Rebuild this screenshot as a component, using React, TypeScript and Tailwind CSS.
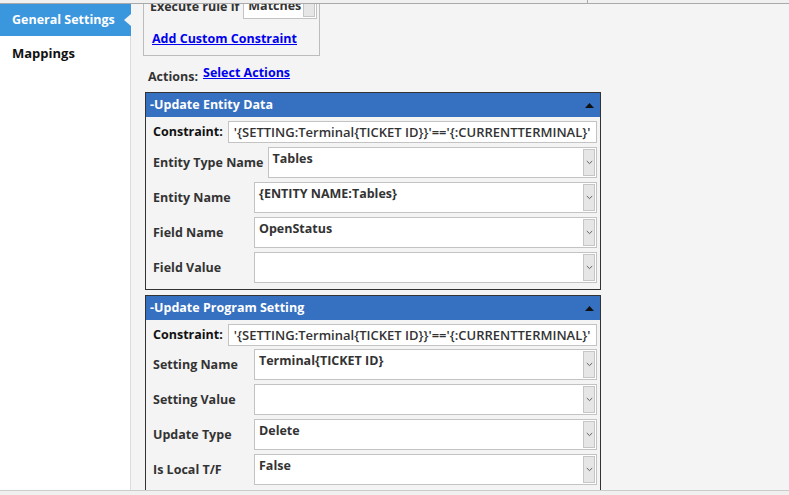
import React from "react";

const font = { fontFamily: '"Open Sans", "Noto Sans", Arial, sans-serif' };

function Chevron() {
  return (
    <svg width="7" height="5" viewBox="0 0 7 5" className="block">
      <path d="M0.8 1 L3.5 3.6 L6.2 1" fill="none" stroke="#555" strokeWidth="0.9" />
    </svg>
  );
}

function Select({ value }: { value: string }) {
  return (
    <div className="relative flex-1 h-[31px] bg-white border border-[#c3c3c3]">
      <div className="pl-[4px] pt-[2px] text-[12.5px] font-bold leading-[18px] text-[#333] whitespace-nowrap">{value}</div>
      <div className="absolute right-[1px] top-[1px] bottom-[1px] w-[12px] bg-[#e6e6e6] border border-[#c6c6c6] flex items-center justify-center">
        <Chevron />
      </div>
    </div>
  );
}

function Row({ label, value }: { label: string; value: string }) {
  return (
    <div className="flex items-center">
      <div className="min-w-[97px] mr-[4px] text-[12.5px] font-bold leading-[18px] text-[#333] whitespace-nowrap">{label}</div>
      <Select value={value} />
    </div>
  );
}

function Panel({ title, rows, pb, mt }: { title: string; rows: { label: string; value: string }[]; pb: string; mt: string }) {
  return (
    <div className="w-[456px] border border-[#333] bg-[#f4f4f4]">
      <div className="h-[24px] bg-[#3670c0] flex items-center justify-between pl-[4px] pr-[6px]">
        <span className="text-[12.5px] font-bold text-white leading-[18px]">-{title}</span>
        <svg width="9" height="5" viewBox="0 0 9 5"><path d="M0 5 L4.5 0 L9 5 Z" fill="#111" /></svg>
      </div>
      <div className={"pl-[7px] pr-[3px] pt-[4px] flex flex-col " + pb}>
        <div className="flex items-center">
          <div className="mr-[5px] text-[12.5px] font-bold leading-[18px] text-[#111] whitespace-nowrap">Constraint:</div>
          <div className="flex-1 h-[22px] bg-white border border-[#c3c3c3] pl-[5px] text-[13px] font-semibold leading-[20px] text-[#333] whitespace-nowrap overflow-hidden">
            '{"{"}SETTING:Terminal{"{"}TICKET ID{"}}"}'=='{"{"}:CURRENTTERMINAL{"}"}'
          </div>
        </div>
        <div className={"flex flex-col gap-[4px] " + mt}>
          {rows.map((r) => (
            <Row key={r.label} label={r.label} value={r.value} />
          ))}
        </div>
      </div>
    </div>
  );
}

export default function App() {
  return (
    <div style={font} className="w-[789px] h-[495px] overflow-hidden bg-[#f0f0f0] flex flex-col">
      <div className="h-[4px] border-b border-[#aaa] bg-[#f0f0f0] flex shrink-0">
        <div className="w-[130px]" />
        <div className="w-[458px] border-r border-[#aaa]" />
      </div>
      <div className="h-[487px] flex overflow-hidden border-b border-[#ccc] shrink-0">
        <div className="w-[131px] shrink-0 bg-white border-r border-[#dcdcdc] flex flex-col">
          <div className="relative h-[32px] bg-[#3a96dd] flex items-center pl-[12px] -mr-[1px]">
            <span className="text-[12.5px] font-bold text-white leading-[18px]">General Settings</span>
            <div className="absolute right-0 top-[10px] w-0 h-0 border-y-[6px] border-y-transparent border-r-[7px] border-r-[#f4f4f4]" />
          </div>
          <div className="h-[35px] flex items-center pl-[12px] text-[13px] font-bold text-[#111]">Mappings</div>
        </div>
        <div className="flex-1 bg-[#f4f4f4] flex flex-col pl-[12px]">
          <div className="-mt-[14px] w-[177px] border border-[#bcbcbc] pt-[4px] pb-[7px] pl-[6px] pr-[2px]">
            <div className="flex items-center h-[24px]">
              <span className="text-[12.5px] font-bold text-[#333] leading-[18px] whitespace-nowrap">Execute rule if</span>
              <div className="relative ml-[4px] flex-1 h-[24px] bg-white border border-[#c3c3c3] pl-[4px] text-[12.5px] font-bold text-[#333] leading-[20px] whitespace-nowrap overflow-hidden">
                Matches
                <div className="absolute right-[1px] top-[1px] bottom-[1px] w-[12px] bg-[#e6e6e6] border border-[#c6c6c6]" />
              </div>
            </div>
            <div className="mt-[11px] pl-[2px] text-[12.5px] font-bold leading-[18px] text-[#0000ee] underline">Add Custom Constraint</div>
          </div>
          <div className="mt-[10px] pl-[5px] flex items-start h-[18px]">
            <span className="mt-[2px] text-[12.5px] font-bold text-[#333] leading-[18px]">Actions:</span>
            <span className="ml-[5px] -mt-[2px] text-[12.5px] font-bold text-[#0000ee] underline leading-[18px]">Select Actions</span>
          </div>
          <div className="mt-[8px] ml-[2px] flex flex-col gap-[5px]">
            <Panel
              pb="pb-[6px]"
              mt="mt-[4px]"
              title="Update Entity Data"
              rows={[
                { label: "Entity Type Name", value: "Tables" },
                { label: "Entity Name", value: "{ENTITY NAME:Tables}" },
                { label: "Field Name", value: "OpenStatus" },
                { label: "Field Value", value: "" },
              ]}
            />
            <Panel
              pb="pb-[6px]"
              mt="mt-[3px]"
              title="Update Program Setting"
              rows={[
                { label: "Setting Name", value: "Terminal{TICKET ID}" },
                { label: "Setting Value", value: "" },
                { label: "Update Type", value: "Delete" },
                { label: "Is Local T/F", value: "False" },
              ]}
            />
          </div>
        </div>
      </div>
    </div>
  );
}
